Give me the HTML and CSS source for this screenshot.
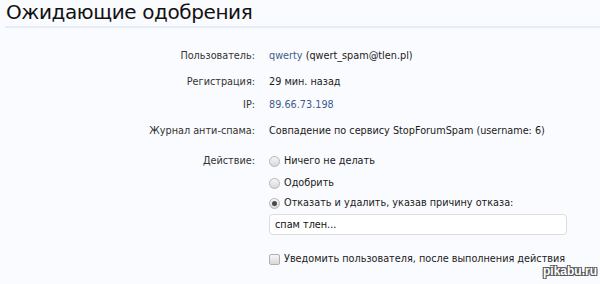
FILE: index.html
```html
<!DOCTYPE html>
<html lang="ru">
<head>
  <meta charset="UTF-8">
  <title>Ожидающие одобрения</title>
  <link rel="stylesheet" href="styles.css">
</head>
<body>

<h1 class="title">Ожидающие одобрения</h1>

<div class="form">
  <div class="row wide">
    <div class="label">Пользователь:</div>
    <div class="value"><a href="#" class="link">qwerty</a> (qwert_spam@tlen.pl)</div>
  </div>
  <div class="row">
    <div class="label">Регистрация:</div>
    <div class="value">29 мин. назад</div>
  </div>
  <div class="row wide">
    <div class="label">IP:</div>
    <div class="value"><a href="#" class="link">89.66.73.198</a></div>
  </div>
  <div class="row">
    <div class="label">Журнал анти-спама:</div>
    <div class="value">Совпадение по сервису StopForumSpam (username: 6)</div>
  </div>

  <div class="row action">
    <div class="label">Действие:</div>
    <div class="value options">
      <label class="option"><span class="radio"></span>Ничего не делать</label>
      <label class="option first-gap"><span class="radio"></span>Одобрить</label>
      <label class="option"><span class="radio checked"></span>Отказать и удалить, указав причину отказа:</label>
      <div class="reason">спам тлен...</div>
    </div>
  </div>

  <div class="row notify">
    <div class="label"></div>
    <div class="value">
      <label class="option"><span class="checkbox"></span>Уведомить пользователя, после выполнения действия</label>
    </div>
  </div>
</div>

<div class="watermark">pikabu.ru</div>

</body>
</html>
```
FILE: styles.css
```css
body {
  margin: 0;
  background: #fafbfe;
  font-family: 'DejaVu Sans', Tahoma, sans-serif;
  font-size: 9.7px;
  color: #222;
  height: 284px;
  overflow: hidden;
  position: relative;
}

.title {
  margin: 0 0 0 5px;
  padding: 0 0 1px 1px;
  font-size: 20px;
  letter-spacing: -0.4px;
  font-weight: normal;
  line-height: 25px;
  color: #111;
  border-bottom: 2px solid #e5eef8;
}

.form {
  padding-top: 21px;
}

.row {
  display: flex;
  gap: 14px;
  line-height: 14px;
  margin-bottom: 9px;
}

.row.wide {
  margin-bottom: 12px;
}

.label {
  width: 255px;
  text-align: right;
  color: #333;
  flex-shrink: 0;
}

.value {
  color: #1a1a1a;
}

.link {
  color: #3f5b8c;
  text-decoration: none;
}

.action {
  margin-top: 16px;
}

.options {
  display: flex;
  flex-direction: column;
  gap: 6px;
}

.option {
  display: flex;
  align-items: center;
  gap: 4px;
}

.first-gap {
  margin-top: 2px;
}

.radio {
  width: 11px;
  height: 11px;
  border-radius: 50%;
  border: 1px solid #b5b5b5;
  background: linear-gradient(#f6f6f6, #d8d8d8);
  box-sizing: border-box;
  display: inline-flex;
  align-items: center;
  justify-content: center;
}

.radio.checked::after {
  content: '';
  width: 5px;
  height: 5px;
  border-radius: 50%;
  background: #484848;
}

.checkbox {
  width: 11px;
  height: 11px;
  border: 1px solid #b0b0b0;
  border-radius: 2px;
  background: linear-gradient(#f6f6f6, #d8d8d8);
  box-sizing: border-box;
}

.reason {
  width: 298px;
  height: 21px;
  box-sizing: border-box;
  border: 1px solid #dcdcdc;
  border-radius: 4px;
  background: #fff;
  padding: 0 5px;
  line-height: 19px;
  margin-top: -2px;
  color: #111;
}

.notify {
  margin-top: 17px;
}

.watermark {
  position: absolute;
  right: 3px;
  bottom: 6px;
  font-family: 'Liberation Sans', sans-serif;
  font-size: 12px;
  font-weight: bold;
  color: #fff;
  text-shadow: -1px -1px 0 #555, 1px -1px 0 #555, -1px 1px 0 #555, 1px 1px 0 #555;
}
```
